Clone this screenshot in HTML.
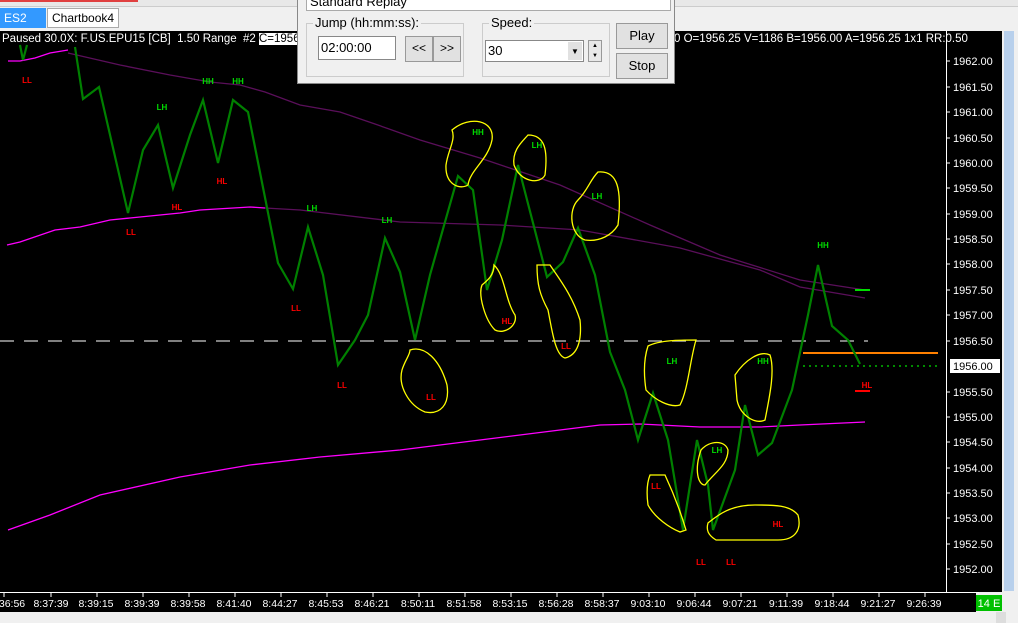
<!DOCTYPE html>
<html><head><meta charset="utf-8"><style>
body{margin:0;width:1018px;height:623px;overflow:hidden;background:#f0f0f0;font-family:"Liberation Sans",sans-serif;position:relative}
.abs{position:absolute}
</style></head><body>
<div class="abs" style="left:0;top:0;width:1018px;height:6px;background:#e8e8e8;border-bottom:1px solid #ccc"></div>
<div class="abs" style="left:0;top:0;width:138px;height:2px;background:#e04040"></div>
<div class="abs" style="left:0;top:8px;width:46px;height:20px;background:#3399ff;color:#fff;font-size:12px;line-height:20px;padding-left:4px;box-sizing:border-box">ES2</div>
<div class="abs" style="left:47px;top:8px;width:72px;height:20px;background:#fff;border:1px solid #aaa;box-sizing:border-box;font-size:12px;line-height:18px;padding-left:4px">Chartbook4</div>
<div class="abs" style="left:0;top:31px;width:946px;height:561px;background:#000"></div>
<div class="abs" style="left:946px;top:31px;width:56px;height:561px;background:#000;border-left:1px solid #fff"></div>
<div class="abs" style="left:1002px;top:31px;width:16px;height:581px;background:#f0f0f0"></div>
<div class="abs" style="left:1004px;top:31px;width:10px;height:560px;background:#b8d0ec"></div>
<div class="abs" style="left:0;top:32px;width:946px;height:15px;color:#fff;font-size:11.5px;line-height:15px;white-space:nowrap;padding-left:2px">Paused 30.0X: F.US.EPU15 [CB]&nbsp; 1.50 Range&nbsp; #2 <span style="background:#fff;color:#000">C=1956.0</span><span style="position:absolute;left:674px">0 O=1956.25 V=1186 B=1956.00 A=1956.25 1x1 RR:0.50</span></div>
<svg class="abs" style="left:0;top:0" width="1018" height="623">
<g fill="none" stroke-width="1.3">
<polyline stroke="#5a0f5a" points="68,53 120,65 170,75 210,82 240,85 265,92 300,105 340,112 375,124 420,140 480,158 560,185 650,225 720,255 800,280 865,290"/>
<polyline stroke="#ff00ff" points="7,245 20,242 55,230 80,227 110,220 130,218 180,213 200,210 250,207 265,208"/>
<polyline stroke="#5a0f5a" points="265,208 300,210 400,222 500,225 580,230 680,248 760,270 800,287 865,298"/>
<polyline stroke="#ff00ff" points="8,530 50,515 100,495 180,477 250,465 320,457 400,450 480,440 560,430 600,425 640,424 700,427 760,427 800,425 865,422"/>
<polyline stroke="#ff00ff" points="8,61 20,61 35,58 50,53 68,50"/>
</g>
<line x1="0" y1="341" x2="868" y2="341" stroke="#ccc" stroke-width="1.3" stroke-dasharray="14,10"/>
<line x1="803" y1="353" x2="938" y2="353" stroke="#ff8000" stroke-width="2"/>
<line x1="803" y1="366" x2="938" y2="366" stroke="#00dd00" stroke-width="1.3" stroke-dasharray="2,4"/>
<line x1="855" y1="290" x2="870" y2="290" stroke="#00dd00" stroke-width="2"/>
<line x1="855" y1="391" x2="870" y2="391" stroke="#ff0000" stroke-width="2"/>
<polyline fill="none" stroke="#008000" stroke-width="2.2" points="20,45 23,60 27,45"/>
<polyline fill="none" stroke="#008000" stroke-width="2.2" points="75,47 83,99 99,87 128,213 143,150 158,125 173,188 190,135 203,100 218,163 233,100 248,112 278,263 293,289 308,227 323,275 338,365 355,340 368,315 385,238 400,272 415,340 430,275 458,176 473,190 487,290 502,240 518,165 547,277 563,262 578,228 595,275 610,352 625,390 638,440 653,393 668,440 683,530 697,440 708,485 713,530 735,470 745,405 758,455 772,443 792,390 808,315 818,265 832,326 848,340 860,364"/>
<g fill="none" stroke="#ffff00" stroke-width="1.3">
<path d="M452,130 C470,115 495,120 492,140 C488,160 470,170 468,185 C460,190 445,185 446,165 C448,150 456,140 452,130Z"/>
<path d="M528,135 C545,135 548,150 545,175 C540,185 520,182 514,165 C512,150 522,142 528,135Z"/>
<path d="M598,172 C618,170 622,190 618,225 C612,235 600,242 585,240 C570,235 568,210 578,200 C588,190 590,180 598,172Z"/>
<path d="M494,265 C505,275 505,300 515,315 C518,325 505,335 495,330 C485,320 478,295 482,285 C488,280 494,275 494,265Z"/>
<path d="M537,265 L550,265 C560,280 572,295 580,320 C582,340 578,355 565,358 C555,355 552,330 548,310 C540,295 537,285 537,265Z"/>
<path d="M410,350 C425,345 440,360 447,385 C450,405 440,415 425,412 C408,405 398,385 402,370 C405,360 410,355 410,350Z"/>
<path d="M648,346 C660,340 680,340 696,340 C690,360 688,390 680,405 C670,408 655,400 646,390 C643,370 645,355 648,346Z"/>
<path d="M735,375 C745,360 760,350 770,355 C775,370 770,395 765,420 C755,425 740,415 737,400Z"/>
<path d="M701,450 C710,440 725,440 728,450 C728,465 715,472 705,485 C698,485 694,470 701,450Z"/>
<path d="M650,475 L665,475 C672,490 680,510 686,530 L680,532 C670,528 655,518 648,505 C646,490 648,480 650,475Z"/>
<path d="M708,523 C718,515 730,505 755,505 C775,505 790,505 798,515 C802,530 795,540 778,540 C760,540 740,540 716,540 C708,535 706,530 708,523Z"/>
</g>
<g font-family="Liberation Sans,sans-serif" font-size="8" font-weight="bold" text-anchor="middle">
<g fill="#00dd00"><text x="208" y="84">HH</text><text x="238" y="84">HH</text><text x="162" y="110">LH</text><text x="312" y="211">LH</text><text x="387" y="223">LH</text><text x="478" y="135">HH</text><text x="537" y="148">LH</text><text x="597" y="199">LH</text><text x="672" y="364">LH</text><text x="763" y="364">HH</text><text x="717" y="453">LH</text><text x="823" y="248">HH</text></g>
<g fill="#ff0000"><text x="27" y="83">LL</text><text x="222" y="184">HL</text><text x="177" y="210">HL</text><text x="131" y="235">LL</text><text x="296" y="311">LL</text><text x="342" y="388">LL</text><text x="431" y="400">LL</text><text x="507" y="324">HL</text><text x="566" y="349">LL</text><text x="656" y="489">LL</text><text x="778" y="527">HL</text><text x="701" y="565">LL</text><text x="731" y="565">LL</text><text x="867" y="388">HL</text></g>
</g>
<g stroke="#fff" stroke-width="1">
<line x1="946" y1="61" x2="950" y2="61"/><line x1="946" y1="87" x2="950" y2="87"/><line x1="946" y1="112" x2="950" y2="112"/><line x1="946" y1="138" x2="950" y2="138"/><line x1="946" y1="163" x2="950" y2="163"/><line x1="946" y1="188" x2="950" y2="188"/><line x1="946" y1="214" x2="950" y2="214"/><line x1="946" y1="239" x2="950" y2="239"/><line x1="946" y1="264" x2="950" y2="264"/><line x1="946" y1="290" x2="950" y2="290"/><line x1="946" y1="315" x2="950" y2="315"/><line x1="946" y1="341" x2="950" y2="341"/><line x1="946" y1="392" x2="950" y2="392"/><line x1="946" y1="417" x2="950" y2="417"/><line x1="946" y1="442" x2="950" y2="442"/><line x1="946" y1="468" x2="950" y2="468"/><line x1="946" y1="493" x2="950" y2="493"/><line x1="946" y1="518" x2="950" y2="518"/><line x1="946" y1="544" x2="950" y2="544"/><line x1="946" y1="569" x2="950" y2="569"/>
</g>
<g font-family="Liberation Sans,sans-serif" font-size="11" fill="#fff">
<text x="953" y="65">1962.00</text><text x="953" y="91">1961.50</text><text x="953" y="116">1961.00</text><text x="953" y="142">1960.50</text><text x="953" y="167">1960.00</text><text x="953" y="192">1959.50</text><text x="953" y="218">1959.00</text><text x="953" y="243">1958.50</text><text x="953" y="268">1958.00</text><text x="953" y="294">1957.50</text><text x="953" y="319">1957.00</text><text x="953" y="345">1956.50</text><text x="953" y="396">1955.50</text><text x="953" y="421">1955.00</text><text x="953" y="446">1954.50</text><text x="953" y="472">1954.00</text><text x="953" y="497">1953.50</text><text x="953" y="522">1953.00</text><text x="953" y="548">1952.50</text><text x="953" y="573">1952.00</text>
</g>
<rect x="950" y="359" width="50" height="14" fill="#fff"/>
<text x="953" y="370" font-family="Liberation Sans,sans-serif" font-size="11" fill="#000">1956.00</text>
<rect x="0" y="593" width="976" height="19" fill="#000"/>
<line x1="0" y1="592.5" x2="979" y2="592.5" stroke="#fff"/>
<g stroke="#fff">
<line x1="4" y1="592" x2="4" y2="597"/><line x1="51" y1="592" x2="51" y2="597"/><line x1="97" y1="592" x2="97" y2="597"/><line x1="143" y1="592" x2="143" y2="597"/><line x1="189" y1="592" x2="189" y2="597"/><line x1="235" y1="592" x2="235" y2="597"/><line x1="281" y1="592" x2="281" y2="597"/><line x1="327" y1="592" x2="327" y2="597"/><line x1="373" y1="592" x2="373" y2="597"/><line x1="419" y1="592" x2="419" y2="597"/><line x1="465" y1="592" x2="465" y2="597"/><line x1="511" y1="592" x2="511" y2="597"/><line x1="557" y1="592" x2="557" y2="597"/><line x1="603" y1="592" x2="603" y2="597"/><line x1="649" y1="592" x2="649" y2="597"/><line x1="695" y1="592" x2="695" y2="597"/><line x1="741" y1="592" x2="741" y2="597"/><line x1="787" y1="592" x2="787" y2="597"/><line x1="833" y1="592" x2="833" y2="597"/><line x1="879" y1="592" x2="879" y2="597"/><line x1="925" y1="592" x2="925" y2="597"/>
</g>
<g font-family="Liberation Sans,sans-serif" font-size="10.5" fill="#fff" text-anchor="middle">
<text x="12" y="607">36:56</text><text x="51" y="607">8:37:39</text><text x="96" y="607">8:39:15</text><text x="142" y="607">8:39:39</text><text x="188" y="607">8:39:58</text><text x="234" y="607">8:41:40</text><text x="280" y="607">8:44:27</text><text x="326" y="607">8:45:53</text><text x="372" y="607">8:46:21</text><text x="418" y="607">8:50:11</text><text x="464" y="607">8:51:58</text><text x="510" y="607">8:53:15</text><text x="556" y="607">8:56:28</text><text x="602" y="607">8:58:37</text><text x="648" y="607">9:03:10</text><text x="694" y="607">9:06:44</text><text x="740" y="607">9:07:21</text><text x="786" y="607">9:11:39</text><text x="832" y="607">9:18:44</text><text x="878" y="607">9:21:27</text><text x="924" y="607">9:26:39</text>
</g>
<rect x="976" y="595" width="26" height="16" fill="#00c000"/>
<text x="989" y="607" font-family="Liberation Sans,sans-serif" font-size="11" fill="#fff" text-anchor="middle">14 E</text>
</svg>
<div class="abs" style="left:0;top:612px;width:1018px;height:11px;background:#f0f0f0"></div>
<div class="abs" style="left:996px;top:612px;width:10px;height:11px;background:#ddd"></div>
<!-- dialog -->
<div class="abs" style="left:297px;top:-2px;width:378px;height:86px;background:#f0f0f0;border:1px solid #888;box-sizing:border-box;font-size:13px">
<div class="abs" style="left:8px;top:-2px;width:360px;height:12px;background:#fff;border:1px solid #aaa;font-size:13px;line-height:8px;overflow:hidden;padding-left:3px">Standard Replay</div>
<div class="abs" style="left:8px;top:24px;width:156px;height:52px;border:1px solid #ccc"></div>
<div class="abs" style="left:15px;top:16px;background:#f0f0f0;padding:0 2px">Jump (hh:mm:ss):</div>
<div class="abs" style="left:20px;top:37px;width:78px;height:24px;background:#fff;border:1px solid #888;box-sizing:border-box;line-height:21px;padding-left:2px">02:00:00</div>
<div class="abs" style="left:107px;top:37px;width:28px;height:26px;background:#e1e1e1;border:1px solid #999;box-sizing:border-box;text-align:center;line-height:23px;font-size:12px">&lt;&lt;</div>
<div class="abs" style="left:135px;top:37px;width:28px;height:26px;background:#e1e1e1;border:1px solid #999;box-sizing:border-box;text-align:center;line-height:23px;font-size:12px">&gt;&gt;</div>
<div class="abs" style="left:184px;top:24px;width:126px;height:52px;border:1px solid #ccc"></div>
<div class="abs" style="left:191px;top:16px;background:#f0f0f0;padding:0 2px">Speed:</div>
<div class="abs" style="left:187px;top:41px;width:99px;height:22px;background:#fff;border:1px solid #888;box-sizing:border-box;line-height:19px;padding-left:2px">30<span style="position:absolute;right:1px;top:1px;width:14px;height:18px;background:#e1e1e1;font-size:8px;text-align:center">▼</span></div>
<div class="abs" style="left:290px;top:41px;width:14px;height:22px;border:1px solid #999;box-sizing:border-box;font-size:6px;text-align:center;line-height:10px;background:#e8e8e8">▲<br>▼</div>
<div class="abs" style="left:318px;top:24px;width:52px;height:26px;background:#e1e1e1;border:1px solid #999;box-sizing:border-box;text-align:center;line-height:23px">Play</div>
<div class="abs" style="left:318px;top:54px;width:52px;height:26px;background:#e1e1e1;border:1px solid #999;box-sizing:border-box;text-align:center;line-height:23px">Stop</div>
</div>
</body></html>
